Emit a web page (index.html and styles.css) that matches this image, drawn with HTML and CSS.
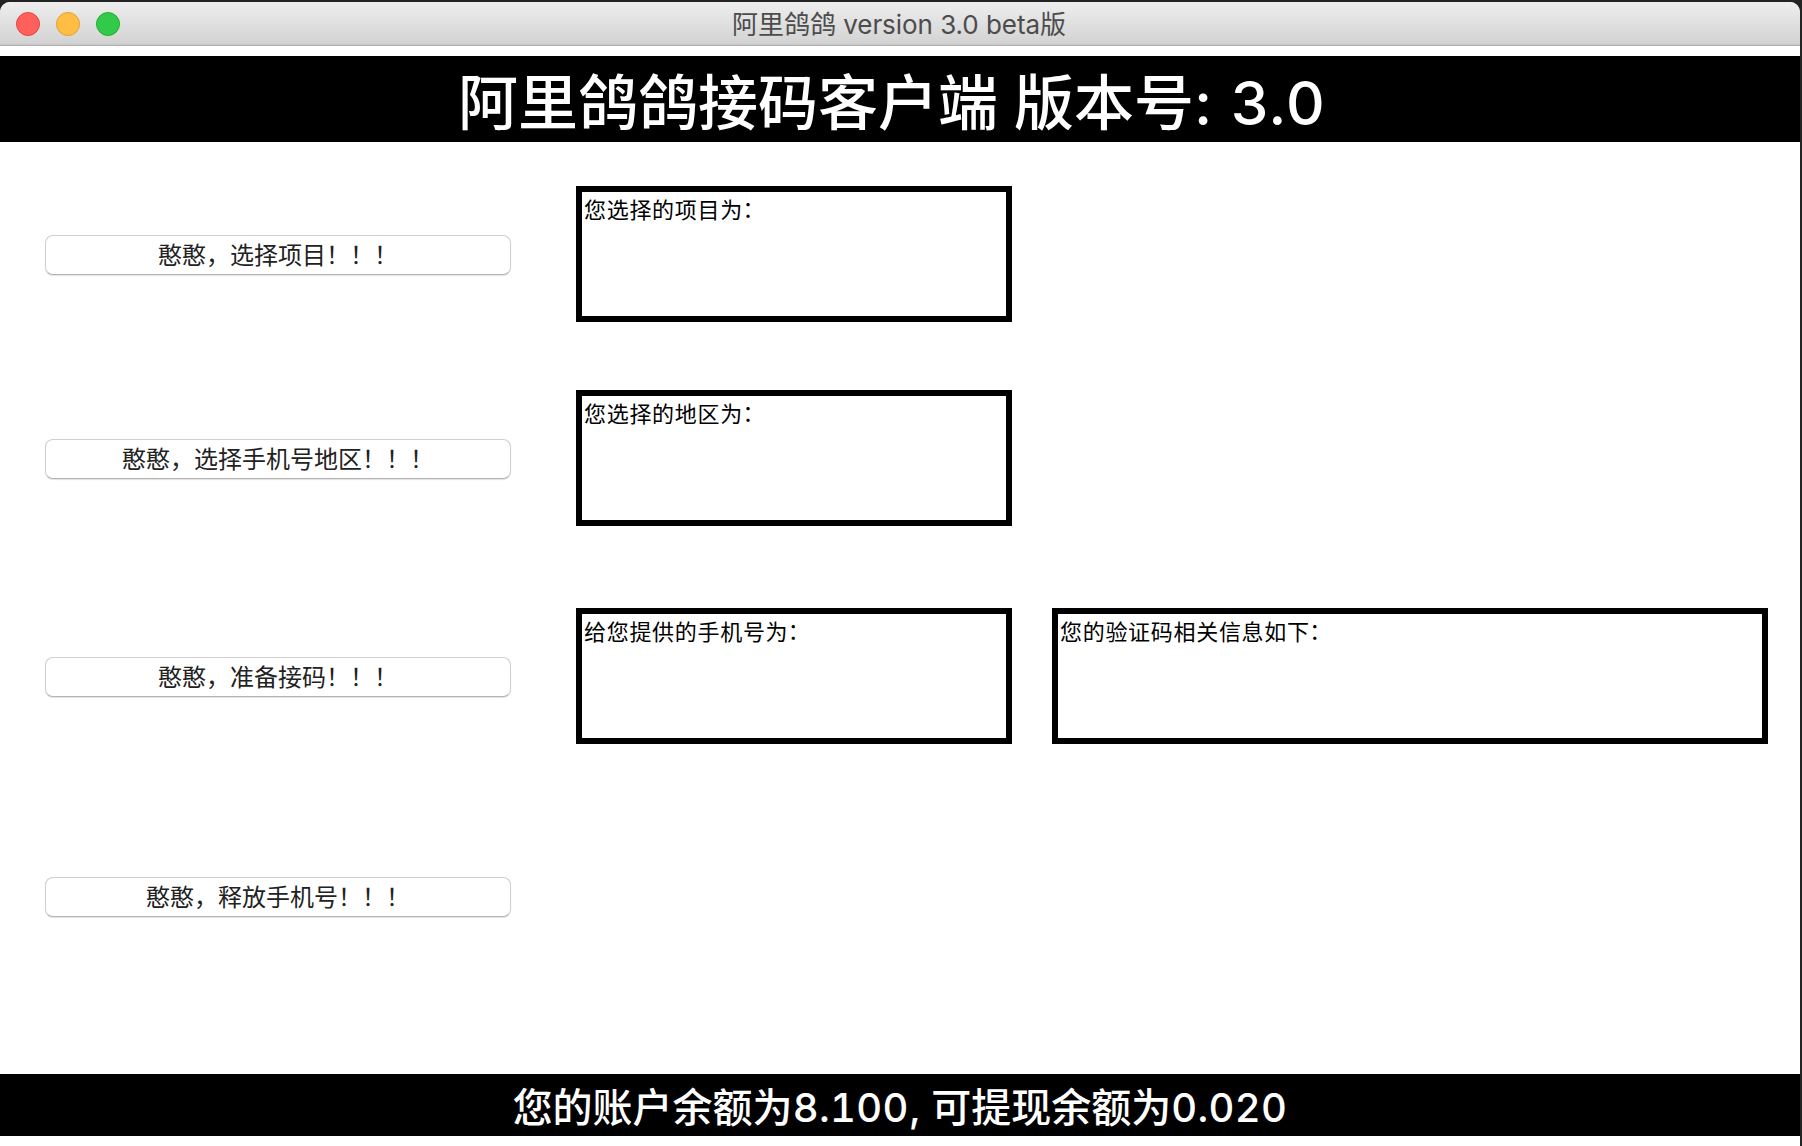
FILE: index.html
```html
<!DOCTYPE html>
<html lang="zh-CN">
<head>
<meta charset="utf-8">
<title>阿里鸽鸽 version 3.0 beta版</title>
<link rel="stylesheet" href="styles.css">
</head>
<body>
<div class="window">
  <header class="titlebar">
    <div class="lights">
      <span class="light close"></span>
      <span class="light minimize"></span>
      <span class="light zoom"></span>
    </div>
    <div class="title">阿里鸽鸽 <span class="title-latin">version 3.0 beta</span>版</div>
  </header>
  <h1 class="banner">阿里鸽鸽接码客户端 版本号<span class="version">: 3.0</span></h1>
  <main class="content">
    <div class="row row-project">
      <button class="btn">憨憨，选择项目！！！</button>
      <div class="box">您选择的项目为<span class="colon">：</span></div>
    </div>
    <div class="row row-region">
      <button class="btn">憨憨，选择手机号地区！！！</button>
      <div class="box">您选择的地区为<span class="colon">：</span></div>
    </div>
    <div class="row row-receive">
      <button class="btn">憨憨，准备接码！！！</button>
      <div class="box">给您提供的手机号为<span class="colon">：</span></div>
      <div class="box">您的验证码相关信息如下<span class="colon">：</span></div>
    </div>
    <div class="row row-release">
      <button class="btn">憨憨，释放手机号！！！</button>
    </div>
  </main>
  <footer class="balance">您的账户余额为<span class="num">8.100</span>, 可提现余额为<span class="num">0.020</span></footer>
</div>
</body>
</html>
```
FILE: styles.css
```css
* { box-sizing: border-box; }

body {
  margin: 0;
  height: 1146px;
  padding: 2px 2px 0 0;
  overflow: hidden;
  background: #232323;
  font-family: Inter, "Noto Sans CJK SC", sans-serif;
}

.window {
  display: flex;
  flex-direction: column;
  height: 1144px;
  padding-bottom: 10px;
  border-radius: 10px 10px 0 0;
  overflow: hidden;
  background: #fff;
}

.titlebar {
  display: grid;
  grid-template-columns: 1fr auto 1fr;
  align-items: center;
  height: 44px;
  margin-bottom: 10px;
  padding: 0 16px;
  background: linear-gradient(#eeeeee, #d2d2d2);
  border-bottom: 1px solid #b0b0b0;
  box-shadow: inset 0 -1px #c8c8c8;
}

.lights { display: flex; gap: 16px; }

.light {
  width: 24px;
  height: 24px;
  border: 1px solid;
  border-radius: 50%;
}
.close { background: #ff605c; border-color: #e2463f; }
.minimize { background: #ffbd44; border-color: #dfa033; }
.zoom { background: #34ca49; border-color: #24ac32; }

.title {
  padding: 2px 2px 0 0;
  font-size: 26px;
  line-height: 40px;
  color: #4c4c4c;
  white-space: nowrap;
}
.title-latin { letter-spacing: -.05px; }

.banner {
  margin: 0;
  height: 86px;
  padding: 4px 16px 0 0;
  background: #000;
  color: #fff;
  font-size: 60px;
  line-height: 86px;
  font-weight: 500;
  text-align: center;
  white-space: nowrap;
}
.version { letter-spacing: 1.2px; }

.content {
  flex: 1;
  display: flex;
  flex-direction: column;
  padding: 44px 32px 0 45px;
}

.row {
  display: grid;
  grid-template-columns: 531px 476px 716px;
  height: 136px;
  align-items: start;
}
.row-project { margin-bottom: 68px; }
.row-region { margin-bottom: 82px; }
.row-receive { margin-bottom: 84px; }

.btn {
  width: 466px;
  height: 40px;
  margin: 49px 0 0;
  padding: 0 0 2px;
  border: 1px solid #cfcfcf;
  border-bottom-color: #b5b5b5;
  border-radius: 8px;
  background: #fff;
  box-shadow: 0 1px 1px rgba(0, 0, 0, .12);
  color: #222;
  font: 24px/36px "Noto Sans CJK SC", sans-serif;
}

.box {
  height: 136px;
  padding: 1px 2px;
  border: 6px solid #000;
  color: #000;
  font: 22px/30px "Noto Sans CJK SC", sans-serif;
  letter-spacing: .7px;
}
.box:nth-child(2) { width: 436px; }

.colon {
  margin-left: -.5px;
  line-height: 1;
  vertical-align: 1px;
}

.balance {
  height: 62px;
  background: #000;
  color: #fff;
  font-size: 40px;
  line-height: 68px;
  font-weight: 500;
  text-align: center;
  white-space: nowrap;
}
.num {
  font-variant-numeric: tabular-nums;
  letter-spacing: .35px;
}
```
